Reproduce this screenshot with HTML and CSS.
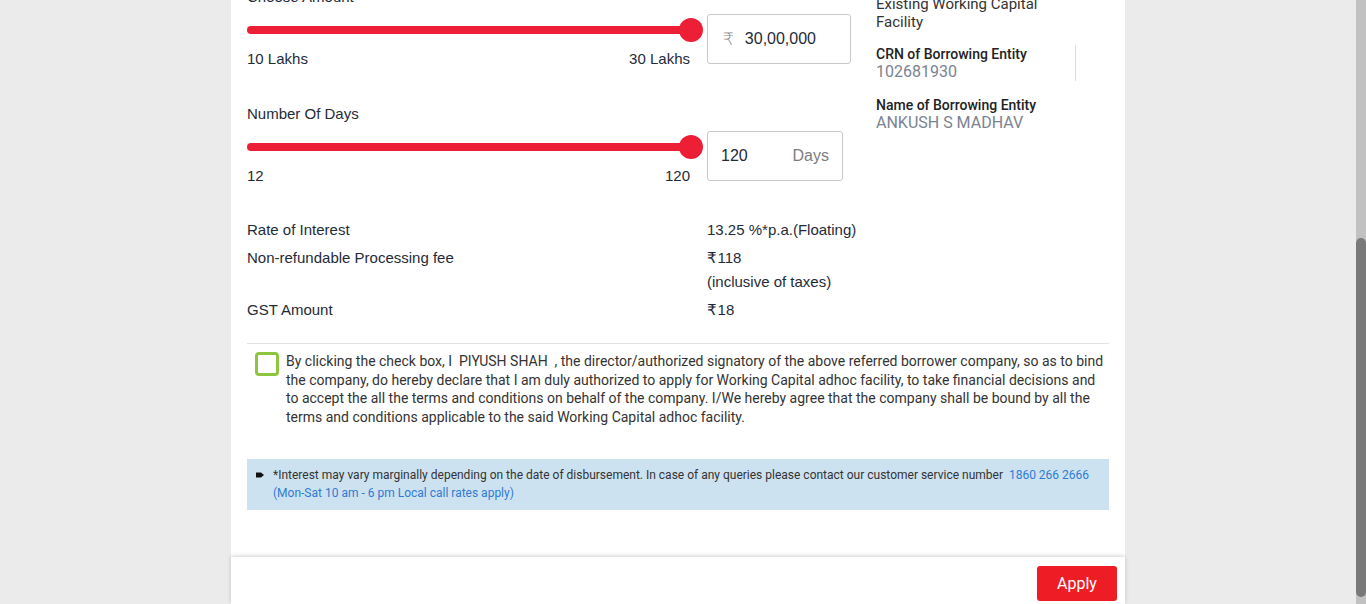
FILE: index.html
```html
<!DOCTYPE html>
<html lang="en">
<head>
<meta charset="utf-8">
<title>Working Capital Adhoc Facility</title>
<link rel="stylesheet" href="styles.css">
</head>
<body>
<div class="page">
  <div class="viewport">
    <div class="card">
      <div class="top">
        <div class="fields">
          <div class="field">
            <div class="field-label">Choose Amount</div>
            <div class="field-row">
              <div class="slider">
                <div class="track-wrap"><div class="track"></div><div class="thumb"></div></div>
                <div class="range-labels"><span>10 Lakhs</span><span>30 Lakhs</span></div>
              </div>
              <div class="input input-amount"><span class="prefix">₹</span><span class="val">30,00,000</span></div>
            </div>
          </div>
          <div class="field field-days">
            <div class="field-label">Number Of Days</div>
            <div class="field-row">
              <div class="slider">
                <div class="track-wrap"><div class="track"></div><div class="thumb"></div></div>
                <div class="range-labels"><span>12</span><span>120</span></div>
              </div>
              <div class="input input-days"><span class="val">120</span><span class="suffix">Days</span></div>
            </div>
          </div>
        </div>
        <div class="info">
          <div class="info-title">Existing Working Capital Facility</div>
          <div class="info-block info-block-bordered">
            <div class="info-label">CRN of Borrowing Entity</div>
            <div class="info-value">102681930</div>
          </div>
          <div class="info-block">
            <div class="info-label">Name of Borrowing Entity</div>
            <div class="info-value">ANKUSH S MADHAV</div>
          </div>
        </div>
      </div>

      <div class="details">
        <div class="detail-row"><div class="detail-label">Rate of Interest</div><div class="detail-value">13.25 %*p.a.(Floating)</div></div>
        <div class="detail-row"><div class="detail-label">Non-refundable Processing fee</div><div class="detail-value"><span class="rupee">₹</span>118<br>(inclusive of taxes)</div></div>
        <div class="detail-row"><div class="detail-label">GST Amount</div><div class="detail-value"><span class="rupee">₹</span>18</div></div>
      </div>

      <div class="divider"></div>

      <div class="declaration">
        <span class="checkbox"></span>
        <p class="declaration-text">By clicking the check box, I&nbsp; PIYUSH SHAH&nbsp; , the director/authorized signatory of the above referred borrower company, so as to bind the company, do hereby declare that I am duly authorized to apply for Working Capital adhoc facility, to take financial decisions and to accept the all the terms and conditions on behalf of the company. I/We hereby agree that the company shall be bound by all the terms and conditions applicable to the said Working Capital adhoc facility.</p>
      </div>

      <div class="notice">
        <svg class="bullet" width="8" height="6" viewBox="0 0 8 6"><polygon points="0,0.5 5,0.5 8,3 5,5.5 0,5.5" fill="#111"/></svg>
        <p class="notice-text">*Interest may vary marginally depending on the date of disbursement. In case of any queries please contact our customer service number <span class="link">&nbsp;1860 266 2666</span><br><span class="link">(Mon-Sat 10 am - 6 pm Local call rates apply)</span></p>
      </div>
    </div>

    <div class="footer">
      <div class="footer-bar"><button class="apply">Apply</button></div>
    </div>
  </div>
  <div class="scrollbar"><div class="scroll-thumb"></div></div>
</div>
</body>
</html>
```

FILE: styles.css
```css
* { box-sizing: border-box; }
html, body { margin: 0; padding: 0; height: 100%; }
body {
  background: #ebebeb;
  font-family: "Liberation Sans", Arial, sans-serif;
  color: #1f2b38;
  overflow: hidden;
}
.page {
  display: flex;
  height: 604px;
}
.viewport {
  flex: 1;
  position: relative;
  overflow: hidden;
}
.scrollbar {
  width: 10px;
  background: #c1c1c1;
  display: flex;
  flex-direction: column;
  padding-top: 238px;
  padding-bottom: 7px;
}
.scroll-thumb {
  flex: 1;
  background: #797979;
  border-radius: 5px;
}
.card {
  width: 894px;
  margin: -13px auto 0;
  min-height: calc(100% + 13px);
  background: #fff;
  padding: 0 16px;
}
.top {
  display: flex;
  gap: 16px;
}
.fields {
  width: 613px;
}
.field-label {
  font-size: 15px;
  line-height: 19px;
  margin-bottom: 8px;
}
.field-days { margin-top: 36px; }
.field-row {
  display: flex;
  align-items: flex-start;
  gap: 4px;
}
.slider {
  width: 456px;
  padding-top: 4px;
}
.track-wrap {
  display: flex;
  align-items: center;
  height: 24px;
}
.track {
  flex: 1;
  height: 8px;
  border-radius: 4px;
  background: #ed1f36;
}
.thumb {
  width: 24px;
  height: 24px;
  border-radius: 50%;
  background: #ed1f36;
  margin-left: -12px;
}
.range-labels {
  display: flex;
  justify-content: space-between;
  margin-top: 7px;
  padding-right: 13px;
  font-size: 15px;
  line-height: 19px;
}
.input {
  height: 50px;
  border: 1px solid #c9c9c9;
  border-radius: 3px;
  display: flex;
  align-items: center;
  font-size: 16px;
  color: #1f2b38;
}
.input-amount {
  width: 144px;
  padding-left: 15px;
}
.prefix {
  color: #8a8a8a;
  font-size: 17px;
  margin-right: 11px;
  font-family: "DejaVu Sans", "Noto Sans", sans-serif;
  font-weight: 300;
}
.input-days {
  width: 136px;
  padding: 0 13px;
  justify-content: space-between;
}
.suffix { color: #7d7d7d; }

.info {
  flex: 1;
  padding-top: 8px;
  font-family: Roboto, "Noto Sans", sans-serif;
}
.info-title {
  width: 199px;
  font-size: 15px;
  line-height: 18px;
  color: #333;
}
.info-block {
  width: 200px;
  margin-top: 14px;
}
.info-block + .info-block { margin-top: 15px; }
.info-block-bordered { border-right: 1px solid #dcdcdc; }
.info-label {
  font-size: 14px;
  line-height: 18px;
  font-weight: 500;
  color: #222;
}
.info-value {
  font-size: 16px;
  line-height: 18px;
  color: #7a8392;
}

.details {
  margin-top: 33px;
  display: flex;
  flex-direction: column;
  gap: 5px;
}
.detail-row {
  display: flex;
  font-size: 15px;
  line-height: 23px;
}
.detail-label { width: 460px; }
.detail-value { flex: 1; }
.rupee {
  font-family: "DejaVu Sans", "Noto Sans", sans-serif;
  font-size: 15px;
  margin-right: 1px;
}

.divider {
  height: 1px;
  background: #e2e2e2;
  margin-top: 21px;
}
.declaration {
  display: flex;
  align-items: flex-start;
  gap: 7px;
  padding: 8px 0 0 8px;
}
.checkbox {
  flex: none;
  width: 24px;
  height: 24px;
  border: 3px solid #8cc63f;
  border-radius: 4px;
}
.declaration-text {
  margin: 0;
  font-family: Roboto, "Noto Sans", sans-serif;
  font-size: 14px;
  line-height: 18.7px;
  color: #333;
}

.notice {
  margin-top: 32px;
  background: #cde2f0;
  display: flex;
  align-items: flex-start;
  padding: 7px 10px 8px 9px;
}
.bullet {
  flex: none;
  margin-top: 6px;
  margin-right: 9px;
}
.notice-text {
  margin: 0;
  font-family: Roboto, "Noto Sans", sans-serif;
  font-size: 12px;
  line-height: 18px;
  color: #333;
}
.link { color: #2f7bd3; }

.footer {
  position: absolute;
  left: 0;
  right: 0;
  bottom: 0;
}
.footer-bar {
  width: 894px;
  height: 47px;
  margin: 0 auto;
  background: #fff;
  box-shadow: 0 -1px 4px rgba(0, 0, 0, 0.18);
  display: flex;
  justify-content: flex-end;
  align-items: flex-start;
  padding: 9px 8px 0 0;
}
.apply {
  width: 80px;
  height: 35px;
  border: none;
  border-radius: 3px;
  background: #ee1c25;
  color: #fff;
  font-family: Roboto, "Noto Sans", sans-serif;
  font-size: 16px;
  padding: 0;
}
```
